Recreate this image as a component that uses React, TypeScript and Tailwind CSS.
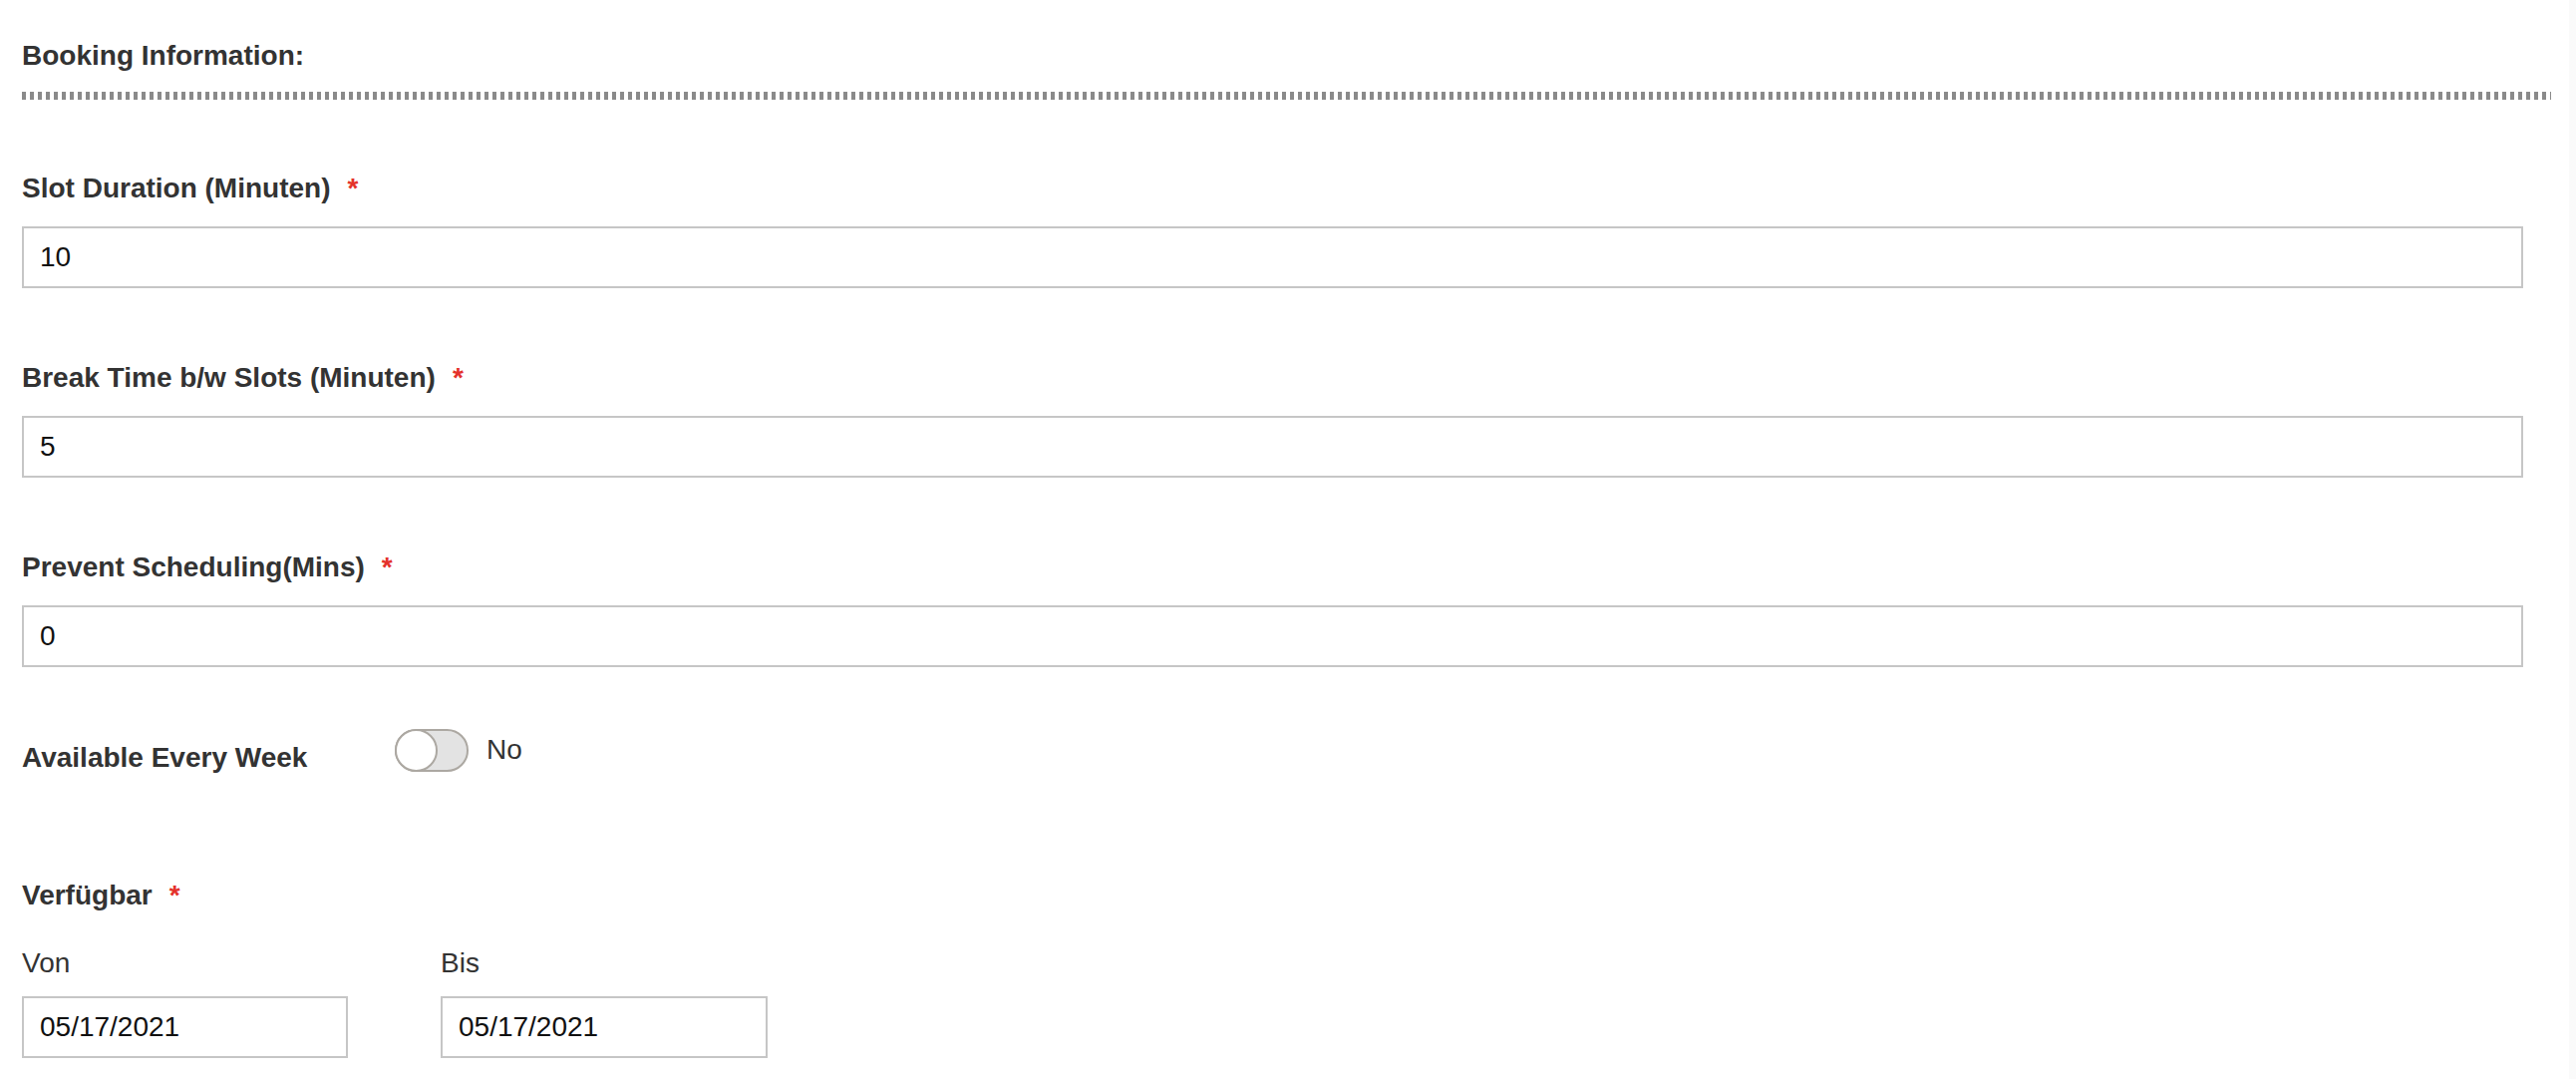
import React from "react";

function Label({ text, required }: { text: string; required?: boolean }) {
  return (
    <div className="text-[28px] leading-[32px] font-bold text-[#333333] whitespace-nowrap">
      {text}
      {required && <span className="ml-[17px] text-[#e4322b]">*</span>}
    </div>
  );
}

function TextField({ value, className }: { value: string; className: string }) {
  return (
    <input
      readOnly
      defaultValue={value}
      className={
        "block h-[62px] border-2 border-[#c6c6c6] bg-white px-[16px] text-[28px] text-[#111111] outline-none font-['Liberation_Sans',Arial,sans-serif] " +
        className
      }
    />
  );
}

export default function App() {
  return (
    <div className="flex min-h-[1082px] bg-white font-['Liberation_Sans',Arial,sans-serif] text-[#333333]">
      <div className="flex-1 pl-[22px] pt-[40px]">
        <h2 className="text-[28px] leading-[32px] font-bold text-[#333333]">Booking Information:</h2>
        <div className="mt-[20px] h-[8px] w-[2537px] bg-[repeating-linear-gradient(90deg,#8a8a8a_0px,#8a8a8a_4px,transparent_4px,transparent_8px)]" />

        <div className="mt-[73px]">
          <Label text="Slot Duration (Minuten)" required />
          <TextField value="10" className="mt-[22px] w-[2509px]" />
        </div>

        <div className="mt-[74px]">
          <Label text="Break Time b/w Slots (Minuten)" required />
          <TextField value="5" className="mt-[22px] w-[2509px]" />
        </div>

        <div className="mt-[74px]">
          <Label text="Prevent Scheduling(Mins)" required />
          <TextField value="0" className="mt-[22px] w-[2509px]" />
        </div>

        <div className="mt-[62px] flex items-start">
          <div className="mt-[13px] w-[374px]">
            <Label text="Available Every Week" />
          </div>
          <div className="relative h-[43px] w-[74px] rounded-full border-2 border-[#aca8a2] bg-[#e3e3e3]">
            <div className="absolute left-[-2px] top-[-2px] h-[43px] w-[43px] rounded-full border-2 border-[#aca8a2] bg-white" />
          </div>
          <span className="ml-[18px] mt-[5px] text-[28px] leading-[32px] text-[#333333]">No</span>
        </div>

        <div className="mt-[106px]">
          <Label text="Verfügbar" required />
        </div>

        <div className="mt-[36px] flex gap-[93px]">
          <div>
            <div className="text-[28px] leading-[32px] text-[#333333]">Von</div>
            <TextField value="05/17/2021" className="mt-[17px] w-[327px]" />
          </div>
          <div>
            <div className="text-[28px] leading-[32px] text-[#333333]">Bis</div>
            <TextField value="05/17/2021" className="mt-[17px] w-[328px]" />
          </div>
        </div>
      </div>
      <div className="w-[7px] bg-[#fafafa]" />
    </div>
  );
}
